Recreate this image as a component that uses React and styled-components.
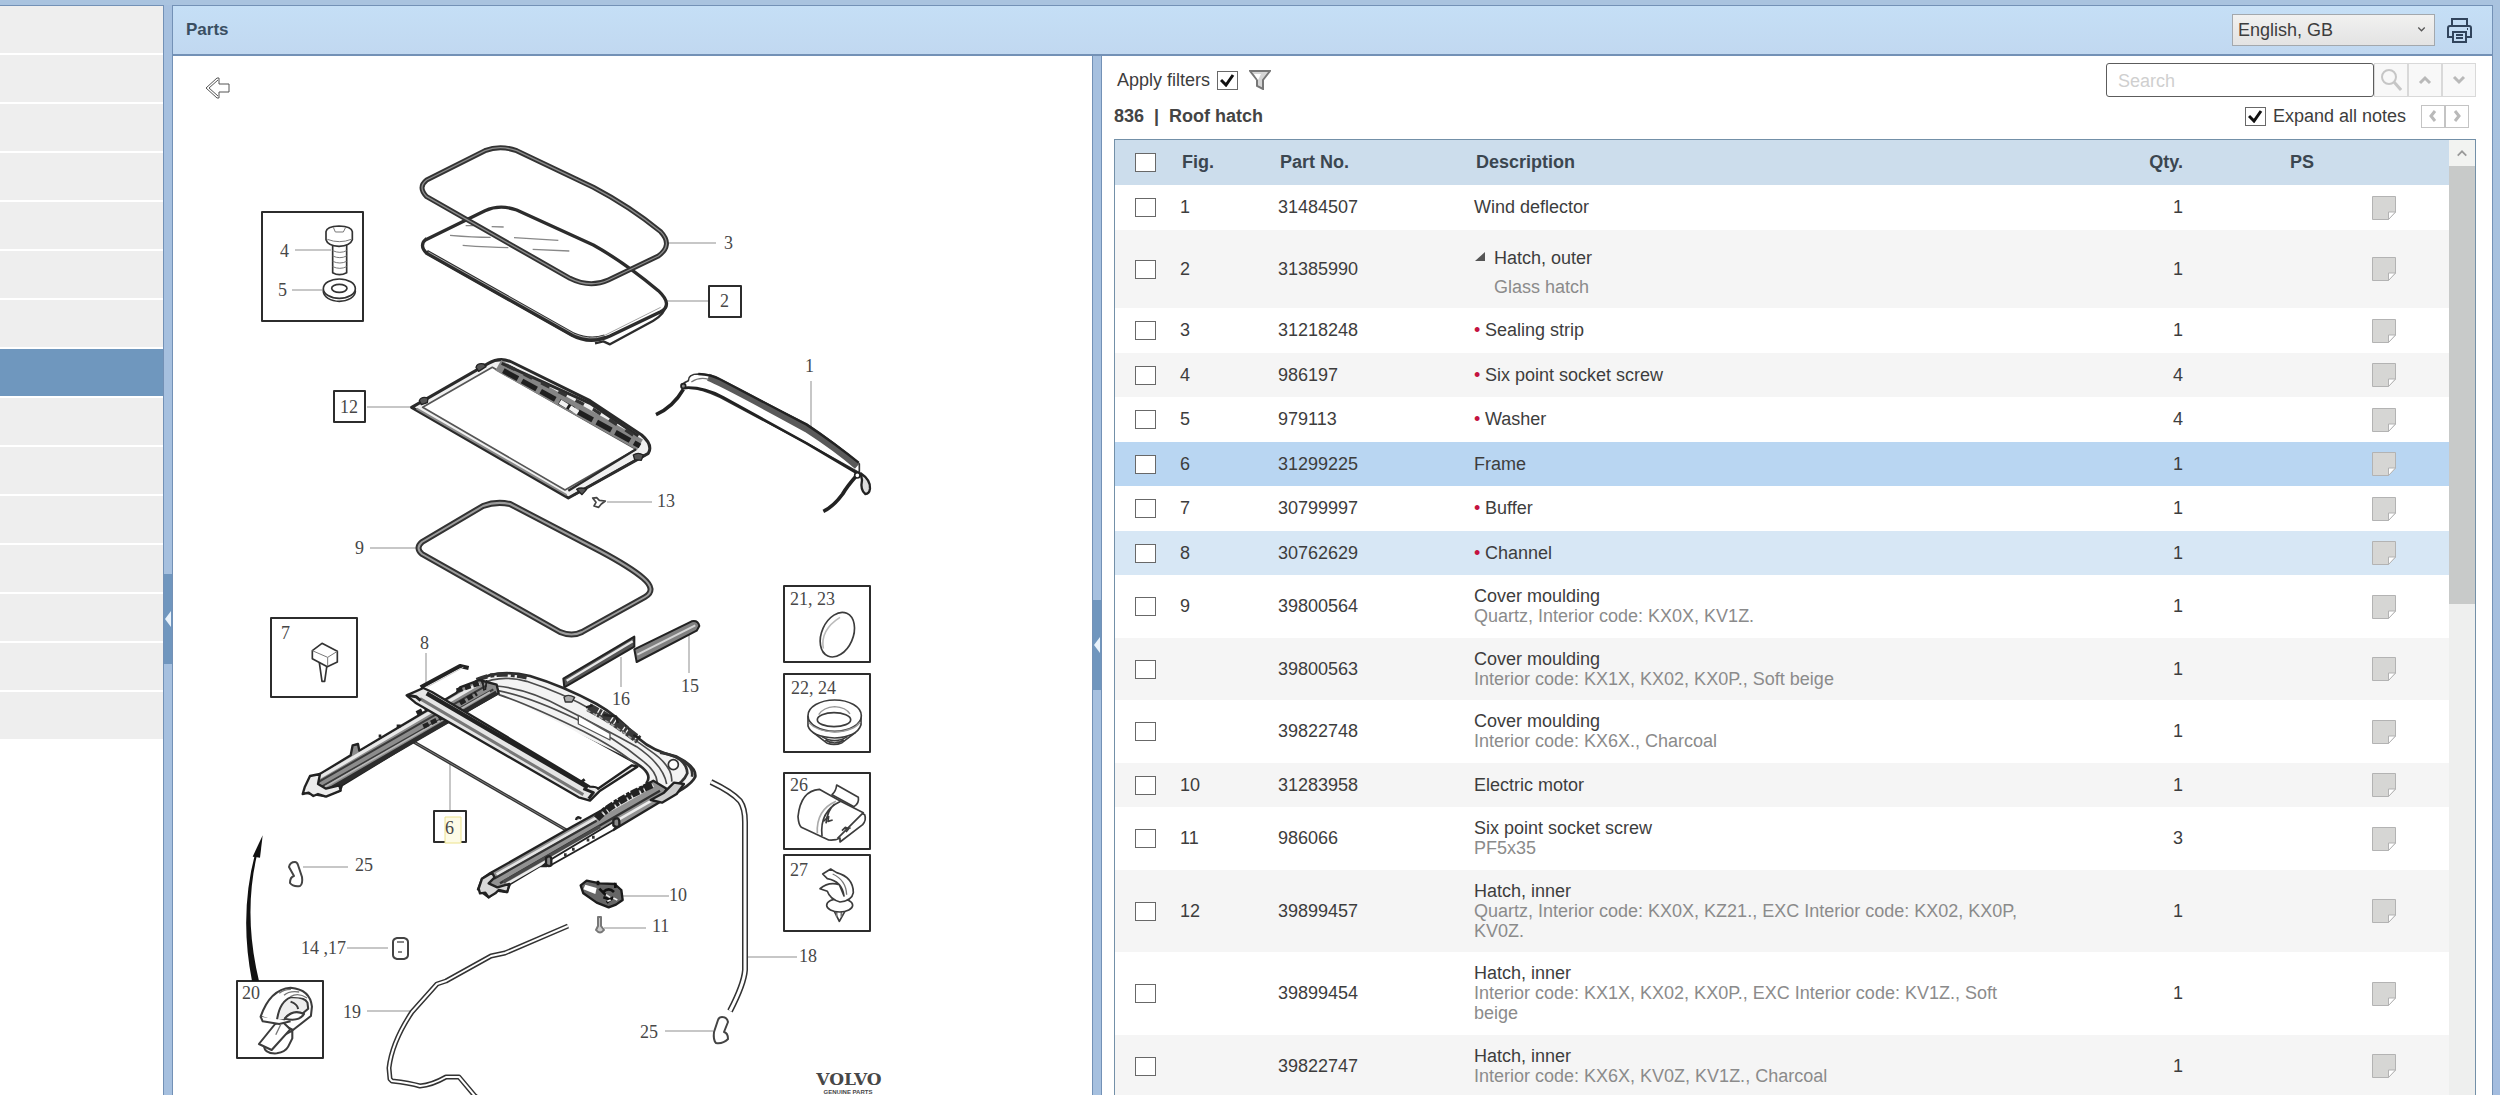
import React from "react";
import styled, { createGlobalStyle, css } from "styled-components";

const GlobalStyle = createGlobalStyle`
  *, *::before, *::after { box-sizing: border-box; }
  body {
    margin: 0;
    background: #a8c1df;
    color: #3d3d3d;
    font-family: "Liberation Sans", Arial, sans-serif;
    font-size: 18px;
    line-height: 20px;
  }
  button, input, select { font: inherit; color: inherit; margin: 0; padding: 0; }
`;

const edge = "#7391b6";

const Shell = styled.div`
  display: flex;
  height: 100vh;
  overflow: hidden;
  align-items: flex-start;
  padding: 5px 7px 0 0;
  background: linear-gradient(#a9c3df, #a4bddf);
`;

const Columns = styled.div`
  display: flex;
  flex: 1;
  min-width: 0;
`;

/* Category column */
const Sidebar = styled.nav`
  width: 163px;
  flex: none;
  background: #ffffff;
  border-top: 1px solid ${edge};
`;

const Category = styled.a`
  display: block;
  height: 49px;
  background: ${(p) => (p.$active ? "#6f97be" : "#eeeeee")};
  border-bottom: 2px solid #ffffff;
`;

/* Splitters */
const SplitBar = styled.div`
  width: 10px;
  flex: none;
  display: flex;
  align-items: center;
  background: #a6c0df;
  border-left: 1px solid ${edge};
  border-right: 1px solid ${edge};
`;

const SplitHandle = styled.button`
  width: 8px;
  height: 90px;
  border: 0;
  background: #7096be;
  display: flex;
  align-items: center;
  justify-content: center;
`;

/* Parts window */
const Window = styled.main`
  flex: 1;
  min-width: 0;
  border-top: 1px solid ${edge};
  border-right: 1px solid ${edge};
  background: #ffffff;
`;

const TitleBar = styled.header`
  display: flex;
  align-items: center;
  gap: 12px;
  height: 50px;
  padding: 0 20px 0 13px;
  background: linear-gradient(#c5dff6, #c1d8f0);
  border-bottom: 2px solid ${edge};
`;

const WindowTitle = styled.h1`
  flex: 1;
  margin: 0;
  font-size: 17px;
  font-weight: bold;
  color: #3a4f62;
`;

const SelectBox = styled.div`
  position: relative;
  display: flex;
  width: 203px;
  height: 32px;

  svg {
    position: absolute;
    right: 9px;
    top: 11px;
    pointer-events: none;
  }
`;

const Select = styled.select`
  appearance: none;
  width: 100%;
  padding: 0 24px 0 5px;
  border: 1px solid #a3a8ad;
  border-radius: 0;
  background: linear-gradient(#f1f1f0, #e3e3e3);
`;

const IconButton = styled.button`
  display: flex;
  border: 0;
  background: none;
`;

const Panes = styled.div`
  display: grid;
  grid-template-columns: minmax(0, 919fr) 10px minmax(0, 1390fr);
`;

const DiagramPane = styled.section`
  overflow: hidden;
`;

const DiagramTools = styled.div`
  height: 60px;
  padding: 21px 32px;
`;

const Drawing = styled.svg`
  display: block;
  font-family: "Liberation Serif", "Times New Roman", serif;
  font-size: 18px;
  fill: none;
  stroke-linejoin: round;

  text {
    fill: #474747;
    stroke: none;
  }
`;

const ListPane = styled.section`
  display: flex;
  flex-direction: column;
  padding: 7px 16px 0 12px;
`;

const ToolRow = styled.div`
  display: flex;
  align-items: center;
  justify-content: space-between;
  height: ${(p) => (p.$tall ? "42px" : "34px")};
  padding: ${(p) => (p.$tall ? "0 7px 4px 0" : "0 0 0 3px")};
`;

const Cluster = styled.div`
  display: flex;
  align-items: center;
`;

const CheckLabel = styled.label`
  display: flex;
  align-items: center;
  gap: 7px;
  margin-right: ${(p) => (p.$apart ? "15px" : "11px")};
`;

const GroupTitle = styled.h2`
  margin: 0;
  font-size: 18px;
  font-weight: bold;
  white-space: pre;
  color: #444444;
`;

const Tick = styled.input`
  appearance: none;
  display: block;
  flex: none;
  width: 21px;
  height: 19px;
  border: 1px solid #686868;
  background: #ffffff;
`;

const TickBox = styled.span`
  position: relative;
  display: block;

  svg {
    position: absolute;
    left: 3px;
    top: 3px;
    pointer-events: none;
  }
`;

const SearchInput = styled.input`
  width: 268px;
  height: 34px;
  padding: 2px 11px 0;
  border: 1px solid #5c5c5c;
  border-radius: 3px;
  background: #ffffff;

  &::placeholder {
    color: #cfcfcf;
    opacity: 1;
  }
`;

const StepButton = styled.button`
  display: flex;
  align-items: center;
  justify-content: center;
  width: ${(p) => (p.$small ? "24px" : "34px")};
  height: ${(p) => (p.$small ? "23px" : "34px")};
  border: 1px solid ${(p) => (p.$small ? "#c4c4c4" : "#d9d9d9")};
  background: ${(p) => (p.$small ? "#ffffff" : "#f8f8f8")};
`;

const TableFrame = styled.div`
  display: flex;
  flex: 1;
  border: 1px solid #7390a8;
  border-bottom: 0;
`;

const TableArea = styled.div`
  flex: 1;
  min-width: 0;
`;

const Table = styled.table`
  width: 100%;
  table-layout: fixed;
  border-collapse: collapse;
`;

const Col = styled.col`
  width: ${(p) => p.$w};
`;

const Head = styled.th`
  height: 45px;
  padding: 0 0 1px 2px;
  text-align: ${(p) => p.$align || "left"};
  font-weight: bold;
  color: #3b4650;
  background: #ccddec;
`;

const tone = {
  selected: "#b9d6f2",
  related: "#d7e7f5",
};

const Row = styled.tr`
  background: #ffffff;
  &:nth-child(even) { background: #f5f5f5; }
  ${(p) =>
    p.$tone &&
    css`
      && { background: ${tone[p.$tone]}; }
    `}
`;

const Cell = styled.td`
  height: 44px;
  padding: 11px 0;
  text-align: ${(p) => p.$align || "left"};
  vertical-align: middle;
  tr:nth-child(odd) > & {
    height: 45px;
    padding-bottom: 12px;
  }
`;

const TickCell = styled.td`
  padding: 0 0 0 20px;
  vertical-align: middle;
`;

const TickHead = styled(Head)`
  padding-left: 20px;
`;

const NoteCell = styled.td`
  padding: 0 0 0 58px;
  vertical-align: middle;
  svg { display: block; }
`;

const Desc = styled.div`
  max-width: 550px;
`;

const Note = styled.div`
  color: #8b8b8b;
`;

const Bullet = styled.span`
  display: inline-block;
  width: 11px;
  color: #c4123f;
  vertical-align: top;
`;

const Assembly = styled.div`
  display: grid;
  grid-template-columns: 20px 1fr;
  row-gap: 9px;
  padding-top: 7px;

  svg { margin-top: 3px; }
  ${Note} { grid-column: 2; }
`;

const ScrollBar = styled.div`
  width: 26px;
  flex: none;
  background: #eeefee;
`;

const ScrollArrow = styled.button`
  display: flex;
  align-items: center;
  justify-content: center;
  width: 26px;
  height: 26px;
  border: 0;
  background: #f2f3f1;
`;

const Thumb = styled.div`
  height: 438px;
  background: #c8cac9;
`;

const Chevron = ({ d, size = 14, color = "#b9b9b9", w = 3 }) => (
  <svg width={size} height={size} viewBox="0 0 14 14" fill="none" stroke={color} strokeWidth={w}>
    <path d={d} />
  </svg>
);

const UP = "M2 10L7 5l5 5";
const DOWN = "M2 4l5 5 5-5";
const LEFT = "M9 2L5 7l4 5";
const RIGHT = "M5 2l4 5-4 5";

const CheckMark = () => (
  <svg width="15" height="13" viewBox="0 0 15 13" fill="none" stroke="#111" strokeWidth="3">
    <path d="M1 6l5 5L13 1" />
  </svg>
);

const Checked = ({ id }) => (
  <TickBox>
    <Tick id={id} type="checkbox" defaultChecked />
    <CheckMark />
  </TickBox>
);

const Funnel = () => (
  <svg width="22" height="20" viewBox="0 0 22 20" fill="#d5d5d5" stroke="#777" strokeWidth="2">
    <path d="M1 1h20l-7 9v9l-6-3v-6z" />
    <path d="M5 4h7l-3 6" fill="#fff" stroke="none" />
  </svg>
);

const Printer = () => (
  <svg width="25" height="25" viewBox="0 0 25 25" fill="none" stroke="#31445c" strokeWidth="2">
    <path d="M5 8V1h15v7" />
    <path d="M5 19H1V10q0-2 2-2h19q2 0 2 2v9h-4" />
    <path d="M6 14h13v10H6zM9 17h7M9 20h7M20 11h1" />
  </svg>
);

const NoteIcon = () => (
  <svg width="24" height="24" viewBox="0 0 24 24" stroke="#b3b3b3" fill="#d6d6d4">
    <path d="M.5.5h23V16l-7 7.500H.5z" />
    <path d="M16.500 23.500V16h7z" fill="#fff" />
  </svg>
);

const BackArrow = () => (
  <svg width="25" height="22" viewBox="0 0 25 22" fill="#fff" stroke="#555">
    <path d="M1 11L12 1h2v6h10v8H14v6h-2z" />
    <path d="M4 11l9-8M4 11l9 8" />
  </svg>
);

const Splitter = ({ label }) => (
  <SplitBar>
    <SplitHandle aria-label={label}>
      <svg width="6" height="16" viewBox="0 0 6 16" fill="#e9f2fb">
        <path d="M6 0v16L0 8z" />
      </svg>
    </SplitHandle>
  </SplitBar>
);

/* A pipe or rubber profile: dark casing with a light core. */
const Pipe = ({ d, w = 9, core = 4, dark = "#333", light = "#e8e8e8" }) => (
  <>
    <path d={d} stroke={dark} strokeWidth={w} />
    <path d={d} stroke={light} strokeWidth={core} />
  </>
);

const Frame = ({ x, y, w, h }) => (
  <rect x={x} y={y} width={w} height={h} stroke="#2c2c2c" strokeWidth="2" />
);

const labels = [
  ["4", 280, 257], ["5", 278, 296], ["3", 724, 249], ["2", 720, 307], ["12", 340, 413],
  ["1", 805, 372], ["13", 657, 507], ["9", 355, 554], ["7", 281, 639], ["8", 420, 649],
  ["15", 681, 692], ["16", 612, 705], ["6", 445, 834], ["25", 355, 871], ["14 ,17", 301, 954],
  ["10", 669, 901], ["11", 652, 932], ["20", 242, 999], ["19", 343, 1018], ["25", 640, 1038],
  ["21, 23", 790, 605], ["22, 24", 791, 694], ["26", 790, 791], ["27", 790, 876], ["18", 799, 962],
];

const leaders =
  "M295 250H331M292 290H322M668 243H716M667 301H709M367 407H411M811 381V430M607 502H652" +
  "M370 548H417M426 653V686M689 634V673M621 657V687M450 763V810M303 867H348M347 948H388" +
  "M623 896H669M604 928H646M367 1011H412M665 1031H713M748 957H797";

const Exploded = () => (
  <Drawing width="918" height="1117" viewBox="173 116 918 1117" role="img" aria-label="Roof hatch exploded view">
    <path d={leaders} stroke="#8f8f8f" />

    <Frame x={262} y={212} w={101} h={109} />
    <Frame x={709} y={286} w={32} h={31} />
    <Frame x={334} y={391} w={31} h={31} />
    <Frame x={271} y={618} w={86} h={79} />
    <Frame x={434} y={811} w={32} h={31} />
    <Frame x={237} y={981} w={86} h={77} />
    <Frame x={784} y={586} w={86} h={76} />
    <Frame x={784} y={674} w={86} h={78} />
    <Frame x={784} y={773} w={86} h={76} />
    <Frame x={784} y={855} w={86} h={76} />
    <rect x="445" y="817" width="16" height="26" stroke="#ece28c" fill="#fdfbe6" />

    <g transform="translate(240 130) scale(.33333)">
      {/* glass */}
      <path d="M556 330L735 242Q780 222 830 240L1060 345Q1150 395 1255 482Q1300 525 1262 545L1110 618Q1050 645 995 615L560 370Q535 345 560 326" stroke="#2c2c2c" strokeWidth="10" />
      <path d="M560 366L1000 614Q1050 635 1095 620" stroke="#2c2c2c" strokeWidth="14" />
      <path d="M565 366L1004 613Q1050 632 1090 618L1262 532" stroke="#a5a5a5" strokeWidth="3" />
      <path d="M1065 640L1090 634L1110 643L1240 572Q1275 552 1280 520" stroke="#2c2c2c" strokeWidth="7" />
      <path d="M677 287h24M755 290l36 1M630 316q70 6 122 6M822 323l133 8M668 346q80 6 137 7M878 358l110 5" stroke="#888" strokeWidth="4" />
      {/* seal */}
      <Pipe w={15} core={4} light="#8d8d8d" d="M560 150L735 62Q780 44 830 62L1060 172Q1170 230 1262 305Q1300 345 1255 378L1105 450Q1050 475 990 445L560 200Q532 172 560 150Z" />
      {/* screw and washer */}
      <g stroke="#333" strokeWidth="5" fill="#fff">
        <path d="M278 340v88q20 12 42 0v-88z" />
        <path d="M278 362q22 10 42 0M278 378q22 10 42 0M278 394q22 10 42 0M278 410q22 10 42 0" strokeWidth="3" fill="none" stroke="#777" />
        <path d="M258 305q2-16 39-17q38 1 40 17v24q-6 18-40 20q-34-2-39-20z" />
        <path d="M262 328q36 14 72 0M280 292l6 14h24l7-14" fill="none" strokeWidth="3" stroke="#777" />
        <ellipse cx="298" cy="484" rx="48" ry="30" />
        <ellipse cx="298" cy="476" rx="48" ry="29" />
        <ellipse cx="298" cy="475" rx="23" ry="12" />
      </g>
      {/* sun shade */}
      <path d="M515 832L745 700Q780 680 815 696L1050 812L1205 915Q1240 945 1225 970L985 1104Z" stroke="#2a2a2a" strokeWidth="9" fill="#f0f0f0" />
      <path d="M548 832L757 712L1188 958L975 1080Z" stroke="#555" strokeWidth="5" fill="#fff" />
      <path d="M530 836L980 1095" stroke="#8a8a8a" strokeWidth="6" />
      <path d="M775 706L1200 944" stroke="#858585" strokeWidth="36" />
      <path d="M785 700L1050 820L1195 918" stroke="#2b2b2b" strokeWidth="9" />
      <path d="M790 722L1200 948" stroke="#1f1f1f" strokeWidth="16" strokeDasharray="50 14" />
      <path d="M800 706L1060 838L1200 928" stroke="#333" strokeWidth="10" strokeDasharray="28 30" />
      <path d="M960 815l22 14M990 832l24 16" stroke="#f2f2f2" strokeWidth="14" />
      <path d="M1188 958L985 1082M1215 975L1000 1096" stroke="#2c2c2c" strokeWidth="7" />
      <path d="M708 712q4-14 24-10l6 8l-22 14zM538 812q6-14 26-8l-2 14l-18 6zM1180 975q14-10 30 0l-6 16l-20-2zM1010 1078q12-8 30 0l-14 16z" fill="#555" stroke="#222" strokeWidth="4" />
      <path d="M1058 1104l12-1l8 8l18 2l-12 9l-8 10l-14-4l6-11z" stroke="#444" strokeWidth="5" />
    </g>

    {/* wind deflector */}
    <g transform="translate(620 340) scale(.33333)">
      <path d="M205 122Q205 102 235 102Q275 104 300 120L560 252Q640 305 718 372V398L560 310L300 172Q230 138 188 146Q180 132 205 122Z" fill="#fff" stroke="#333" strokeWidth="5" />
      <path d="M265 112Q300 124 560 266Q650 324 712 378" stroke="#5a5a5a" strokeWidth="22" />
      <path d="M235 102Q275 104 300 118L560 254Q650 314 716 368" stroke="#222" strokeWidth="7" />
      <path d="M188 144Q245 138 310 172L560 310L712 400" stroke="#222" strokeWidth="8" />
      <path d="M214 126q24-16 52-8" stroke="#777" strokeWidth="4" />
      <path d="M190 148Q160 200 108 224M712 404Q680 440 668 462Q640 500 610 514" stroke="#222" strokeWidth="11" />
      <path d="M722 400Q752 420 750 446Q748 462 736 462Q720 450 726 420z" stroke="#222" strokeWidth="7" fill="#ddd" />
      <circle cx="712" cy="406" r="8" fill="#fff" stroke="#222" strokeWidth="5" />
      <circle cx="190" cy="138" r="7" fill="#888" stroke="#222" strokeWidth="5" />
    </g>

    {/* cover moulding */}
    <Pipe w={6} core={2} light="#9c9c9c" d="M422 542L483 506Q496 501 510 504L600 551Q630 567 643 578Q657 590 645 597L582 632Q572 637 560 632L422 554Q415 548 422 542Z" />

    <g transform="translate(230 600) scale(.33333)">
      {/* 15, 16 strips */}
      <path d="M1213 148L1385 64Q1404 60 1408 78L1400 92L1220 186z" fill="#808080" stroke="#222" strokeWidth="6" />
      <path d="M1222 164L1396 76" stroke="#d5d5d5" strokeWidth="6" />
      <path d="M1000 236L1213 110V140L1003 262z" fill="#555" stroke="#222" strokeWidth="6" />
      <path d="M1010 242L1208 124" stroke="#e6e6e6" strokeWidth="7" />
      {/* buffer */}
      <g stroke="#333" strokeWidth="5" fill="#fff">
        <path d="M268 188l8 56h8l8-56z" />
        <path d="M247 152l29-22l46 24v32l-30 14l-45-24z" />
        <path d="M247 152l46 20l29-18M293 172v26" fill="none" strokeWidth="3" stroke="#777" />
      </g>
      {/* rear cross bar */}
      <Pipe w={10} core={3} light="#7d7d7d" d="M548 424L1012 692" />
      {/* front cross member */}
      <path d="M738 244Q800 205 900 228Q1000 258 1100 312Q1160 345 1225 415Q1270 455 1340 470Q1400 500 1396 530Q1380 565 1280 605L1250 548Q1270 520 1215 488L800 285Z" fill="#f3f3f3" stroke="#2b2b2b" strokeWidth="8" />
      <path d="M800 282Q930 330 1210 490L1240 555L1160 560L1080 600L700 400Z" fill="#fff" />
      <path d="M748 254Q810 222 890 244Q1000 280 1090 332Q1180 395 1260 452Q1330 500 1325 545M800 258Q900 268 1000 324Q1120 385 1220 440Q1300 495 1310 552M804 272Q900 290 1040 358Q1150 410 1240 484Q1280 515 1282 548M806 284Q900 315 1060 394Q1170 450 1225 500" stroke="#4c4c4c" strokeWidth="5" />
      <path d="M740 240Q800 212 890 232" stroke="#333" strokeWidth="13" strokeDasharray="34 9 12 7" />
      <path d="M1076 322Q1150 360 1226 420" stroke="#3a3a3a" strokeWidth="26" strokeDasharray="30 4 8 4" />
      <path d="M1070 330Q1150 372 1216 424" stroke="#9a9a9a" strokeWidth="5" strokeDasharray="12 9" />
      <path d="M1068 322l20-6M1120 345l38 4l6 20M1210 405l20 10" stroke="#222" strokeWidth="7" />
      <path d="M1045 346L1140 400V420L1045 372Z" fill="#fff" stroke="#555" strokeWidth="4" />
      <path d="M1002 292q10-12 32 0l-8 14h-20z" fill="#aaa" stroke="#333" strokeWidth="4" />
      <circle cx="1330" cy="494" r="15" fill="#fff" stroke="#333" strokeWidth="5" />
      <path d="M1290 458Q1370 470 1372 520Q1360 550 1320 566M1352 478Q1392 500 1386 530" stroke="#333" strokeWidth="8" />
      {/* left rail */}
      <path d="M240 540L362 466L368 436L384 432L388 452L680 278L690 262L748 240L800 254L806 280L548 426L336 556L330 572L284 588L222 578Z" fill="#8c8c8c" stroke="#222" strokeWidth="7" />
      <path d="M262 536L748 250" stroke="#e8e8e8" strokeWidth="10" />
      <path d="M262 548L770 256M275 560L790 268" stroke="#3a3a3a" strokeWidth="6" />
      <path d="M285 560L780 276" stroke="#b8b8b8" strokeWidth="5" />
      <path d="M300 568L800 278" stroke="#2c2c2c" strokeWidth="14" />
      <path d="M680 272L760 246M560 340L640 300M690 310L740 280M580 380L640 350" stroke="#222" strokeWidth="14" strokeDasharray="18 8" />
      <path d="M756 238l6 34M770 240l-4 30" stroke="#222" strokeWidth="5" />
      <path d="M446 408h8M500 378h12" stroke="#222" strokeWidth="9" />
      <path d="M224 562l16-34l30-6l-6 30l24 14l40-10l4 16l-44 18l-24-8l-14 6l-14-10l-18 4z" fill="#ececec" stroke="#222" strokeWidth="7" />
      {/* channel */}
      <path d="M572 262L690 198L716 204" stroke="#222" strokeWidth="12" />
      <path d="M590 262L700 202" stroke="#ccc" strokeWidth="3" />
      <path d="M530 286L580 264L606 276L1080 560Q1100 560 1104 566L1206 496L1222 500L1108 574L1080 602L1046 592L556 308Z" fill="#e6e6e6" stroke="#222" strokeWidth="7" />
      <path d="M590 280L1074 562" stroke="#222" strokeWidth="13" />
      <path d="M570 296L1060 584" stroke="#777" strokeWidth="9" />
      <path d="M532 286l26 4l14 12M1048 550l16-12M1060 566l30 12l-14 18" stroke="#222" strokeWidth="9" />
      {/* right rail */}
      <path d="M780 820L1030 678L1110 634L1270 542L1310 566L1290 606L1150 690L1148 680L950 798L930 798L840 852L830 876L800 872L776 892L744 868L756 836Z" fill="#929292" stroke="#222" strokeWidth="7" />
      <path d="M800 824L1270 556" stroke="#e4e4e4" strokeWidth="9" />
      <path d="M792 836L1100 662M810 850L1290 572" stroke="#333" strokeWidth="7" />
      <path d="M820 846L1110 680" stroke="#4a4a4a" strokeWidth="10" />
      <path d="M830 852L1296 584" stroke="#ececec" strokeWidth="8" />
      <path d="M1100 656Q1140 610 1270 552" stroke="#222" strokeWidth="22" strokeDasharray="24 5 10 4" />
      <path d="M960 780L1160 660L1168 672L1150 690L958 798L940 796z" fill="#fff" stroke="#222" strokeWidth="6" />
      <path d="M1002 764h8M1026 748h8M1070 720h8M1086 712h8" stroke="#333" strokeWidth="9" />
      <path d="M948 774q14-12 16 4v18q-10 6-16-4zM1150 660q16-12 18 4v14q-10 6-18-2zM1038 660q2-14 16-4" fill="#888" stroke="#222" strokeWidth="7" />
      <path d="M1262 600l40-22l30-30l30 4l-22 30l-44 26z" fill="#ccc" stroke="#222" strokeWidth="7" />
      <path d="M746 866l10-30l30-18l8 14l-18 18l26 12l36-10l-6 24l-26-6l-10 10l-20 12l-10-14l-16 2z" fill="#d8d8d8" stroke="#222" strokeWidth="7" />
      {/* electric motor */}
      <path d="M1052 856l18-14l40 8l44 2l20 18l4 30l-20 14l-22 8l-36-14l-40-28z" fill="#666" stroke="#1c1c1c" strokeWidth="7" />
      <path d="M1066 854l34 10l-4 18l-36-14z" fill="#fff" />
      <path d="M1104 842v14M1156 848v16M1120 876q16-16 32 0M1120 892l24 8M1130 908l20-16M1108 866l20 20" stroke="#111" strokeWidth="8" />
      <path d="M1128 884l12 8M1150 894l12 6M1132 904l10-4" stroke="#eee" strokeWidth="5" />
      {/* pointer */}
      <path d="M98 706L68 770L90 773Z" fill="#111" />
    </g>

    {/* curved pointer tail */}
    <path d="M252 981Q239 915 255 854L257 855Q243 915 259 981Z" fill="#111" />

    {/* hoses */}
    <Pipe w={6} core={3} light="#ffffff" d="M711 782Q732 792 740 801Q745 808 745 822V970Q744 984 730 1011" />
    <Pipe w={5} core={2} light="#ffffff" d="M568 926L505 953L491 956L446 981L437 984L412 1012Q392 1042 389 1068L390 1079L392 1081Q410 1083 420 1086Q432 1085 446 1077L459 1077L475 1096L520 1130" />

    <g stroke="#444" strokeWidth="2" fill="#fff">
      <path d="M289 867q1-5 6-5q2 0 3 3l4 12q1 7-2 9q-7 1-10-3q0-6 4-7z" />
      <path d="M728 1022q-1-5-6-5q-3 0-4 3l-4 12q-1 8 2 11q7 1 12-4q0-6-4-7z" />
      <path d="M393 942q0-3 4-4h7q4 1 4 4v13q0 3-4 4h-7q-4-1-4-4z" />
      <path d="M397 942h7M398 952h4" stroke="#888" />
      <path d="M598 917h3v9l3 4q-4 5-8 0l2-4z" stroke="#777" fill="#ccc" />
    </g>

    {/* clip 20 */}
    <g transform="translate(220 820) scale(.34435 .33333)" stroke="#3c3c3c" strokeWidth="6" fill="#fff">
      <path d="M128 680Q130 702 165 700Q190 696 198 680L210 655V632L160 660Z" />
      <path d="M118 590Q145 508 205 503Q262 508 267 560L264 588L212 630L165 606L118 590Z" />
      <path d="M165 604Q172 545 205 532Q245 530 254 548L256 566L238 582Q205 570 186 600Z" fill="#eee" />
      <path d="M205 545q20 8 22 22M188 596q24-30 56-14q-14 24-56 14" />
      <path d="M160 612L113 672L150 690L204 628L180 604Z" />
      <path d="M118 590L124 604L172 612L205 604" />
      <path d="M176 614L162 644M172 520q12-12 34-12M186 526q14-14 44-10M205 530q22-14 48 4" stroke="#777" strokeWidth="4" />
    </g>

    {/* plugs, tape and clip */}
    <g transform="translate(740 570) scale(.33333)" stroke="#3c3c3c" strokeWidth="5" fill="#fff">
      <ellipse cx="292" cy="194" rx="47" ry="70" transform="rotate(24 292 194)" />
      <path d="M250 236Q240 180 300 142" stroke="#bbb" />
      <path d="M220 488L262 520Q284 528 306 518L346 488Z" />
      <path d="M246 500Q284 524 322 500M256 510Q284 528 312 510" fill="none" />
      <path d="M204 440V468Q214 500 284 504Q352 500 363 464V438Z" />
      <ellipse cx="284" cy="437" rx="80" ry="47" />
      <ellipse cx="282" cy="449" rx="50" ry="21" />
      <path d="M236 434Q250 412 284 410Q318 412 330 432M206 458Q230 484 284 486Q340 484 361 456" fill="none" stroke="#999" strokeWidth="4" />
      <path d="M290 645L355 682Q358 700 342 710L276 674Q288 664 290 645Z" />
      <path d="M238 658Q182 662 174 740Q176 766 184 772L266 810Q285 812 300 804L300 816L368 764Q380 750 374 734Z" />
      <path d="M246 798Q238 724 302 694L370 728L292 806M258 760Q262 720 284 702" />
      <path d="M232 790Q228 720 288 694" fill="none" stroke="#aaa" />
      <path d="M250 754l16-14l-2 14l14-4M306 782l10-10l10 4l-8 10M312 776l20-2" fill="none" />
      <path d="M280 1018L298 1054L318 1018Z" />
      <path d="M290 1020v20M304 1020v20" stroke="#777" />
      <ellipse cx="299" cy="1006" rx="39" ry="20" />
      <path d="M248 912L272 897L290 908Q340 922 340 968Q336 992 300 996Q270 988 262 964L240 956Q266 934 298 944L312 978Q306 934 262 926Z" />
      <path d="M278 912Q318 930 320 974" fill="none" stroke="#777" strokeWidth="4" />
    </g>

    {labels.map(([text, x, y]) => (
      <text key={text + x} x={x} y={y}>{text}</text>
    ))}
    <g fontWeight="bold" textAnchor="middle">
      <text x="849" y="1085" fontSize="17" fontFamily="DejaVu Serif, serif">VOLVO</text>
      <text x="848" y="1094" fontSize="6" fontFamily="Liberation Sans Narrow, Liberation Sans, sans-serif">GENUINE PARTS</text>
    </g>
  </Drawing>
);

const parts = [
  { fig: "1", no: "31484507", name: "Wind deflector", qty: 1 },
  { fig: "2", no: "31385990", name: "Hatch, outer", note: "Glass hatch", qty: 1, kind: "assembly" },
  { fig: "3", no: "31218248", name: "Sealing strip", qty: 1, kind: "child" },
  { fig: "4", no: "986197", name: "Six point socket screw", qty: 4, kind: "child" },
  { fig: "5", no: "979113", name: "Washer", qty: 4, kind: "child" },
  { fig: "6", no: "31299225", name: "Frame", qty: 1, tone: "selected" },
  { fig: "7", no: "30799997", name: "Buffer", qty: 1, kind: "child" },
  { fig: "8", no: "30762629", name: "Channel", qty: 1, kind: "child", tone: "related" },
  { fig: "9", no: "39800564", name: "Cover moulding", note: "Quartz, Interior code: KX0X, KV1Z.", qty: 1 },
  { fig: "", no: "39800563", name: "Cover moulding", note: "Interior code: KX1X, KX02, KX0P., Soft beige", qty: 1 },
  { fig: "", no: "39822748", name: "Cover moulding", note: "Interior code: KX6X., Charcoal", qty: 1 },
  { fig: "10", no: "31283958", name: "Electric motor", qty: 1 },
  { fig: "11", no: "986066", name: "Six point socket screw", note: "PF5x35", qty: 3 },
  { fig: "12", no: "39899457", name: "Hatch, inner", note: "Quartz, Interior code: KX0X, KZ21., EXC Interior code: KX02, KX0P, KV0Z.", qty: 1 },
  { fig: "", no: "39899454", name: "Hatch, inner", note: "Interior code: KX1X, KX02, KX0P., EXC Interior code: KV1Z., Soft beige", qty: 1 },
  { fig: "", no: "39822747", name: "Hatch, inner", note: "Interior code: KX6X, KV0Z, KV1Z., Charcoal", qty: 1 },
];

const Description = ({ part }) => {
  if (part.kind === "assembly") {
    return (
      <Assembly>
        <svg width="12" height="11" viewBox="0 0 12 11" fill="#555">
          <path d="M11 1v9H1z" />
        </svg>
        <div>{part.name}</div>
        <Note>{part.note}</Note>
      </Assembly>
    );
  }
  return (
    <Desc>
      <div>
        {part.kind === "child" && <Bullet>•</Bullet>}
        {part.name}
      </div>
      {part.note && <Note>{part.note}</Note>}
    </Desc>
  );
};

const PartsTable = () => (
  <Table>
    <colgroup>
      <Col $w="65px" />
      <Col $w="98px" />
      <Col $w="196px" />
      <Col $w="auto" />
      <Col $w="100px" />
      <Col $w="131px" />
      <Col $w="135px" />
    </colgroup>
    <thead>
      <tr>
        <TickHead><Tick type="checkbox" aria-label="Select all" /></TickHead>
        <Head>Fig.</Head>
        <Head>Part No.</Head>
        <Head>Description</Head>
        <Head $align="right">Qty.</Head>
        <Head $align="right">PS</Head>
        <Head />
      </tr>
    </thead>
    <tbody>
      {parts.map((part) => (
        <Row key={part.no} $tone={part.tone}>
          <TickCell><Tick type="checkbox" aria-label={`Select ${part.no}`} /></TickCell>
          <Cell>{part.fig}</Cell>
          <Cell>{part.no}</Cell>
          <Cell><Description part={part} /></Cell>
          <Cell $align="right">{part.qty}</Cell>
          <Cell />
          <NoteCell><NoteIcon /></NoteCell>
        </Row>
      ))}
    </tbody>
  </Table>
);

export default function App() {
  return (
    <>
      <GlobalStyle />
      <Shell>
        <Columns>
          <Sidebar aria-label="Categories">
            {Array.from({ length: 15 }, (_, i) => (
              <Category key={i} href="#" $active={i === 7} />
            ))}
          </Sidebar>
          <Splitter label="Collapse categories" />
          <Window>
            <TitleBar>
              <WindowTitle>Parts</WindowTitle>
              <SelectBox>
                <Select aria-label="Language">
                  <option>English, GB</option>
                </Select>
                <Chevron d={DOWN} size={9} color="#555" w={2} />
              </SelectBox>
              <IconButton aria-label="Print"><Printer /></IconButton>
            </TitleBar>
            <Panes>
              <DiagramPane>
                <DiagramTools>
                  <IconButton aria-label="Back"><BackArrow /></IconButton>
                </DiagramTools>
                <Exploded />
              </DiagramPane>
              <Splitter label="Collapse diagram" />
              <ListPane>
                <ToolRow>
                  <Cluster>
                    <CheckLabel htmlFor="filters">
                      Apply filters
                      <Checked id="filters" />
                    </CheckLabel>
                    <IconButton aria-label="Filter"><Funnel /></IconButton>
                  </Cluster>
                  <Cluster>
                    <SearchInput type="text" placeholder="Search" aria-label="Search" />
                    <StepButton aria-label="Find">
                      <svg width="22" height="22" viewBox="0 0 22 22" fill="none" stroke="#c6c6c6" strokeWidth="2">
                        <circle cx="9" cy="8" r="7" />
                        <path d="M14 13l7 8" strokeWidth="3" />
                      </svg>
                    </StepButton>
                    <StepButton aria-label="Previous match"><Chevron d={UP} /></StepButton>
                    <StepButton aria-label="Next match"><Chevron d={DOWN} /></StepButton>
                  </Cluster>
                </ToolRow>
                <ToolRow $tall>
                  <GroupTitle>{"836  |  Roof hatch"}</GroupTitle>
                  <Cluster>
                    <CheckLabel htmlFor="notes" $apart>
                      <Checked id="notes" />
                      Expand all notes
                    </CheckLabel>
                    <StepButton $small aria-label="Previous"><Chevron d={LEFT} /></StepButton>
                    <StepButton $small aria-label="Next"><Chevron d={RIGHT} /></StepButton>
                  </Cluster>
                </ToolRow>
                <TableFrame>
                  <TableArea><PartsTable /></TableArea>
                  <ScrollBar>
                    <ScrollArrow aria-label="Scroll up"><Chevron d={UP} size={12} color="#999" w={2} /></ScrollArrow>
                    <Thumb />
                  </ScrollBar>
                </TableFrame>
              </ListPane>
            </Panes>
          </Window>
        </Columns>
      </Shell>
    </>
  );
}
